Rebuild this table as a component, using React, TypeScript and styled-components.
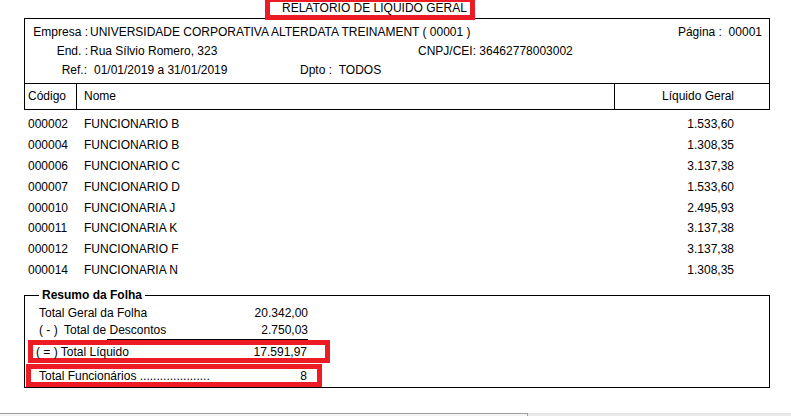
import styled, { createGlobalStyle } from 'styled-components';

type Employee = { code: string; name: string; value: string };

const employees: Employee[] = [
  { code: '000002', name: 'FUNCIONARIO B', value: '1.533,60' },
  { code: '000004', name: 'FUNCIONARIO B', value: '1.308,35' },
  { code: '000006', name: 'FUNCIONARIO C', value: '3.137,38' },
  { code: '000007', name: 'FUNCIONARIO D', value: '1.533,60' },
  { code: '000010', name: 'FUNCIONARIA J', value: '2.495,93' },
  { code: '000011', name: 'FUNCIONARIA K', value: '3.137,38' },
  { code: '000012', name: 'FUNCIONARIO F', value: '3.137,38' },
  { code: '000014', name: 'FUNCIONARIA N', value: '1.308,35' },
];

const RED = '#ed1c24';

const GlobalStyle = createGlobalStyle`
  html, body {
    margin: 0;
    padding: 0;
    background: #fff;
  }

  body {
    font-family: 'Liberation Sans', Arial, sans-serif;
    font-size: 12px;
    color: #000;
  }
`;

const Page = styled.div`
  width: 791px;
  height: 416px;
  display: flex;
  flex-direction: column;
  overflow: hidden;
`;

const TitleRow = styled.div`
  display: flex;
  padding-left: 265px;
  position: relative;
  z-index: 1;
`;

const TitleBox = styled.div`
  width: 210px;
  height: 20px;
  box-sizing: border-box;
  border: 5px solid ${RED};
  border-top-width: 2px;
  background: #fff;
  display: flex;
  align-items: center;
  padding-left: 12px;
  line-height: 13px;
`;

const HeaderBox = styled.div`
  margin: -2px 0 0 24px;
  width: 746px;
  box-sizing: border-box;
  border: 1px solid #000;
  display: flex;
  flex-direction: column;
`;

const Info = styled.div`
  height: 64px;
  box-sizing: border-box;
  padding: 3px 7px 0 0;
  display: flex;
  flex-direction: column;
`;

const InfoRow = styled.div`
  display: flex;
  height: 19px;
  align-items: center;
  white-space: nowrap;
`;

const Label = styled.span<{ $width: number }>`
  width: ${({ $width }) => $width}px;
  text-align: right;
  flex-shrink: 0;
`;

const Value = styled.span<{ $width?: number; $indent?: number }>`
  padding-left: ${({ $indent }) => $indent ?? 2}px;
  ${({ $width }) => ($width ? `width: ${$width}px; flex-shrink: 0;` : 'flex: 1;')}
`;

const ColumnHeader = styled.div`
  display: flex;
  height: 25px;
  border-top: 1px solid #000;
`;

const HeadCell = styled.div<{ $width?: number; $right?: boolean; $divider?: boolean; $indent?: number }>`
  display: flex;
  align-items: center;
  box-sizing: border-box;
  padding-bottom: 2px;
  padding-left: ${({ $indent }) => $indent ?? 0}px;
  padding-right: ${({ $right }) => ($right ? 35 : 0)}px;
  ${({ $width }) => ($width ? `width: ${$width}px; flex-shrink: 0;` : 'flex: 1;')}
  justify-content: ${({ $right }) => ($right ? 'flex-end' : 'flex-start')};
  border-left: ${({ $divider }) => ($divider ? '1px solid #000' : 'none')};
`;

const List = styled.div`
  margin: 4px 0 0 24px;
  width: 746px;
  display: flex;
  flex-direction: column;
`;

const Row = styled.div`
  display: flex;
  height: 20.8px;
  align-items: center;
`;

const Code = styled.span`
  width: 56px;
  padding-left: 4px;
`;

const Name = styled.span`
  flex: 1;
`;

const Amount = styled.span`
  padding-right: 36px;
  text-align: right;
`;

const Summary = styled.fieldset`
  margin: 8px 0 0 24px;
  padding: 2px 0 0;
  width: 746px;
  height: 100px;
  min-height: 0;
  box-sizing: border-box;
  border: 1px solid #000;
  display: flex;
  flex-direction: column;
  flex-shrink: 0;
`;

const Legend = styled.legend`
  margin-left: 14px;
  padding: 0 3px;
  font-weight: bold;
  line-height: 14px;
`;

const SummaryLine = styled.div<{ $left: number; $width: number; $boxed?: boolean }>`
  display: flex;
  align-items: center;
  justify-content: space-between;
  box-sizing: border-box;
  margin-left: ${({ $left }) => $left}px;
  width: ${({ $width }) => $width}px;
  height: ${({ $boxed }) => ($boxed ? 23 : 17)}px;
  flex-shrink: 0;
  white-space: pre;
  ${({ $boxed }) => ($boxed ? `border: 5px solid ${RED};` : '')}
`;

const Rule = styled.div`
  margin: 1px 0 0 82px;
  width: 201px;
  height: 1px;
  flex-shrink: 0;
  background: #000;
`;

const Footer = styled.div`
  margin-top: auto;
  display: flex;
  height: 3px;
`;

const FooterTab = styled.div`
  width: 527px;
  border-top: 1px solid #a0a0a0;
  border-right: 1px solid #a0a0a0;
  background: #f4f4f4;
`;

const FooterFill = styled.div`
  flex: 1;
  border-top: 1px solid #e3e3e3;
  background: #e8e8e8;
`;

export default function App() {
  return (
    <Page>
      <GlobalStyle />
      <TitleRow>
        <TitleBox>RELATORIO DE LIQUIDO GERAL</TitleBox>
      </TitleRow>
      <HeaderBox>
        <Info>
          <InfoRow>
            <Label $width={63}>Empresa :</Label>
            <Value>UNIVERSIDADE CORPORATIVA ALTERDATA TREINAMENT ( 00001 )</Value>
            <span>Página :&nbsp;&nbsp;00001</span>
          </InfoRow>
          <InfoRow>
            <Label $width={63}>End. :</Label>
            <Value $width={328}>Rua Sílvio Romero, 323</Value>
            <span>CNPJ/CEI: 36462778003002</span>
          </InfoRow>
          <InfoRow>
            <Label $width={62}>Ref.:</Label>
            <Value $width={206} $indent={7}>01/01/2019 a 31/01/2019</Value>
            <span>Dpto :&nbsp;&nbsp;TODOS</span>
          </InfoRow>
        </Info>
        <ColumnHeader>
          <HeadCell $width={51} $indent={3}>Código</HeadCell>
          <HeadCell $divider $indent={7}>Nome</HeadCell>
          <HeadCell $width={155} $right $divider>
            Líquido Geral
          </HeadCell>
        </ColumnHeader>
      </HeaderBox>
      <List>
        {employees.map((e) => (
          <Row key={e.code}>
            <Code>{e.code}</Code>
            <Name>{e.name}</Name>
            <Amount>{e.value}</Amount>
          </Row>
        ))}
      </List>
      <Summary>
        <Legend>Resumo da Folha</Legend>
        <SummaryLine $left={14} $width={269}>
          <span>Total Geral da Folha</span>
          <span>20.342,00</span>
        </SummaryLine>
        <SummaryLine $left={14} $width={269}>
          <span>( - )  Total de Descontos</span>
          <span>2.750,03</span>
        </SummaryLine>
        <Rule />
        <SummaryLine $left={3} $width={302} $boxed style={{ padding: '0 18px 0 3px' }}>
          <span>( = ) Total Líquido</span>
          <span>17.591,97</span>
        </SummaryLine>
        <SummaryLine $left={1} $width={296} $boxed style={{ marginTop: 1, padding: '0 10px 0 8px' }}>
          <span>Total Funcionários .....................</span>
          <span>8</span>
        </SummaryLine>
      </Summary>
      <Footer>
        <FooterTab />
        <FooterFill />
      </Footer>
    </Page>
  );
}
